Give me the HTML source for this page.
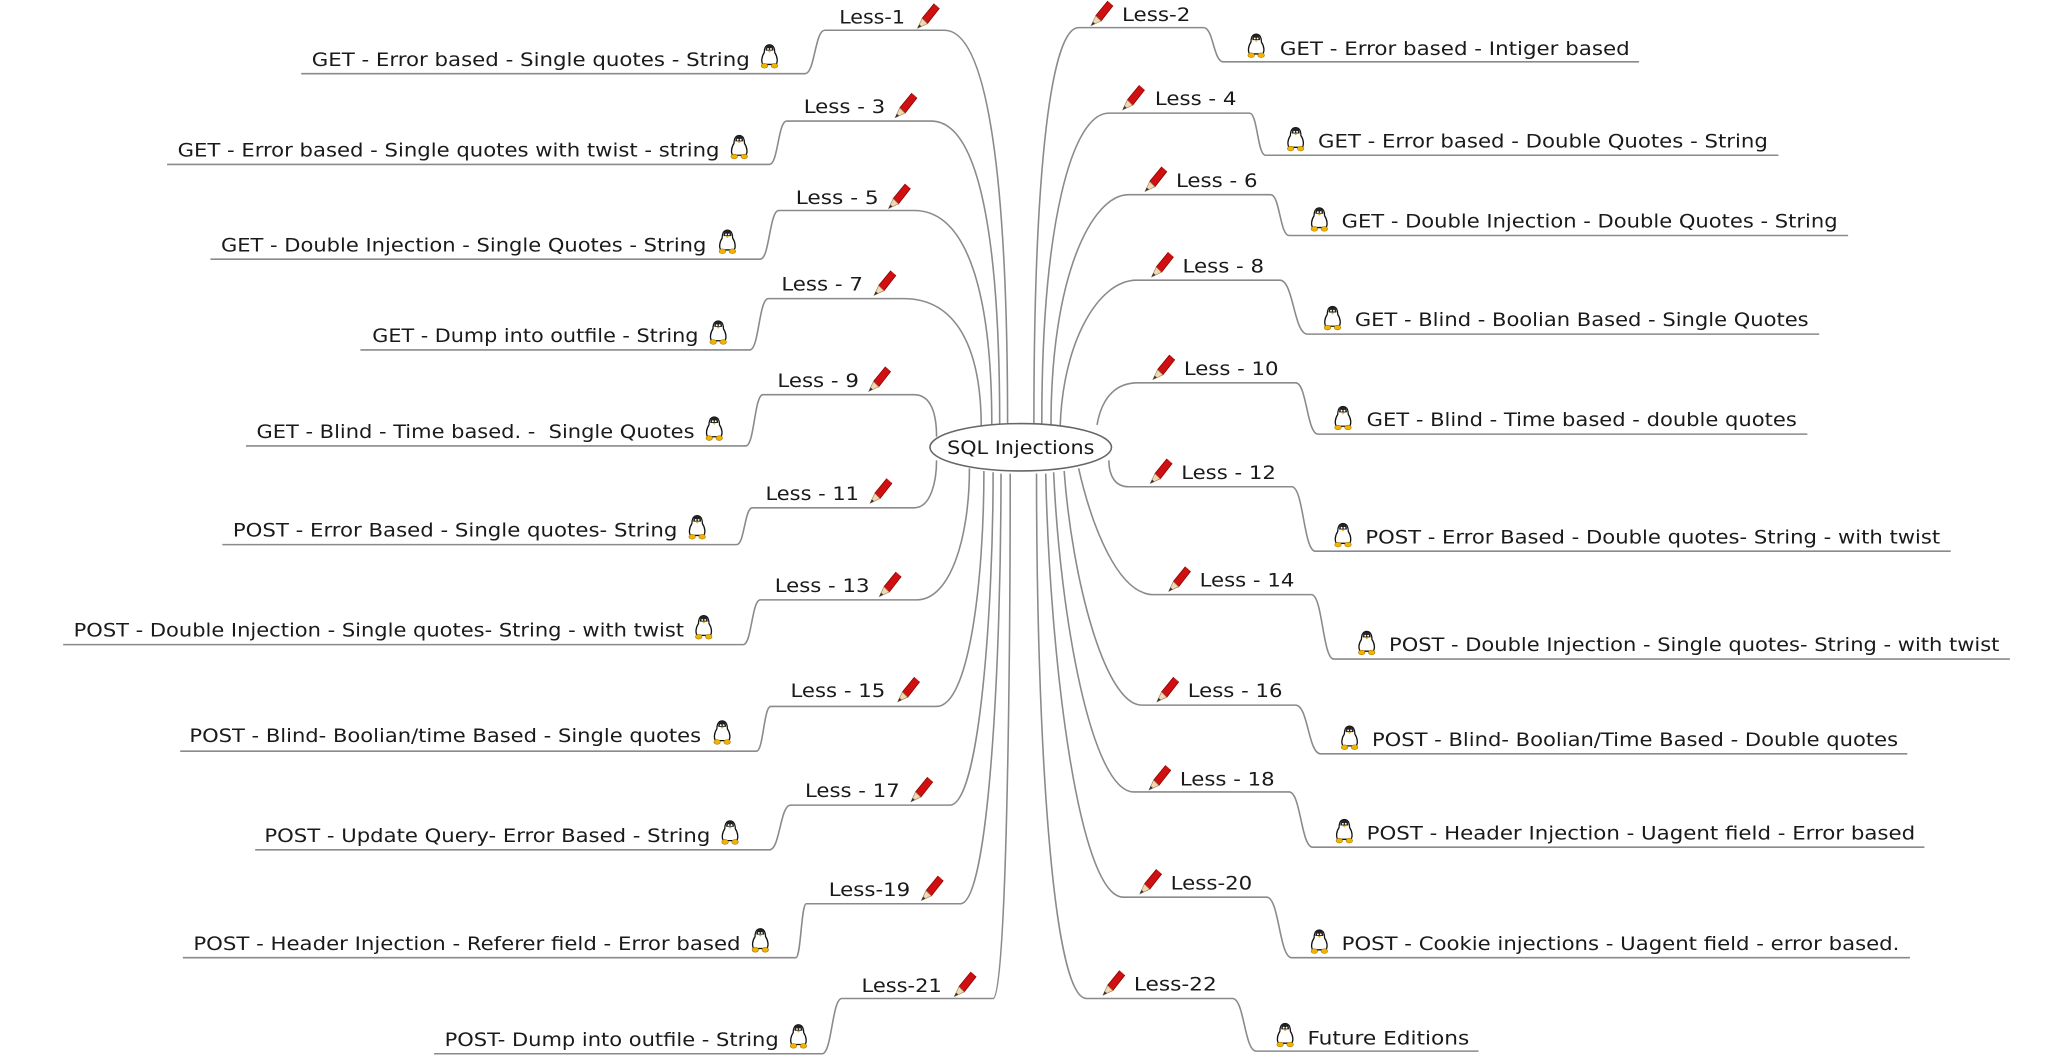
<!DOCTYPE html>
<html><head><meta charset="utf-8"><style>
html,body{margin:0;padding:0;background:#fff;width:2052px;height:1059px;overflow:hidden}
svg{display:block}
text{font-family:"DejaVu Sans Condensed","DejaVu Sans","Liberation Sans",sans-serif;font-size:14.5px;fill:#1a1a1a}
path.c{fill:none;stroke:#8a8a8a;stroke-width:1.2}
</style></head><body>
<svg width="2052" height="1059" viewBox="0 0 1560 805" preserveAspectRatio="none" xmlns="http://www.w3.org/2000/svg">
<defs>
<g id="pen">
<polygon points="6,12 15,1 19,4.5 10,16" fill="#d01010" stroke="#8a0000" stroke-width="0.6"/>
<polygon points="15,1 19,4.5 17,2" fill="#ff6060"/>
<polygon points="6,12 10,16 2.5,19.5" fill="#f0d8b0" stroke="#a08060" stroke-width="0.5"/>
<polygon points="2.5,19.5 3.8,16.5 5.5,18" fill="#333"/>
</g>
<g id="tux">
<path d="M8,1 C4.5,1 4,5 4,7 C2,10 1.5,14 3,16 L13,16 C14.5,14 14,10 12,7 C12,5 11.5,1 8,1Z" fill="#fff" stroke="#111" stroke-width="1"/>
<path d="M8,1 C5.5,1 5,3.5 5,5.5 L11,5.5 C11,3.5 10.5,1 8,1Z" fill="#222"/>
<circle cx="6.9" cy="4.2" r="0.7" fill="#fff"/><circle cx="9.1" cy="4.2" r="0.7" fill="#fff"/>
<path d="M6.7,5.6 L9.3,5.6 L8,7Z" fill="#f0b000"/>
<ellipse cx="4.2" cy="17" rx="2.5" ry="1.8" fill="#f0b400" stroke="#a07000" stroke-width="0.4"/>
<ellipse cx="11.8" cy="17" rx="2.5" ry="1.8" fill="#f0b400" stroke="#a07000" stroke-width="0.4"/>
</g>
</defs>

<path class="c" d="M229 56 H612 C619.5 56 619.5 23 627 23 H718 C752 23 766 143 766 322"/>
<path class="c" d="M127 125 H585 C591.5 125 591.5 92 598 92 H708 C745 92 760 184 760 322"/>
<path class="c" d="M160 197 H578 C585 197 585 160 592 160 H695 C736 160 754 225 754 323"/>
<path class="c" d="M274 266 H570 C577 266 577 227 584 227 H687 C728 227 746 266 746 325"/>
<path class="c" d="M187 339 H567 C573.5 339 573.5 300 580 300 H695 C708 300 712 315 712 332"/>
<path class="c" d="M169 414 H560 C566 414 566 386 572 386 H695 C708 386 712 365 712 350"/>
<path class="c" d="M48 490 H565 C571.5 490 571.5 456 578 456 H697 C722 456 737 410 737 356"/>
<path class="c" d="M137 571 H575 C580.5 571 580.5 537 586 537 H712 C737 537 748 440 748 358"/>
<path class="c" d="M194 646 H585 C593 646 593 612 601 612 H722 C745 612 755 460 755 359"/>
<path class="c" d="M139 728 H605 C609 728 609 687 613 687 H730 C752 687 761 500 761 360"/>
<path class="c" d="M330 801 H625 C632.5 801 632.5 759 640 759 H755 C765 759 768 520 768 360"/>
<path class="c" d="M786 322 C786 120 800 21 820 21 H915 C922.5 21 922.5 47 930 47 H1246"/>
<path class="c" d="M792 322 C792 170 815 86 843 86 H950 C956 86 956 118 962 118 H1352"/>
<path class="c" d="M799 323 C799 210 830 148 858 148 H966 C973 148 973 179 980 179 H1405"/>
<path class="c" d="M806 324 C808 260 835 213 864 213 H973 C983.5 213 983.5 254 994 254 H1383"/>
<path class="c" d="M834 323 C838 300 850 291 865 291 H985 C993.5 291 993.5 330 1002 330 H1374"/>
<path class="c" d="M843 350 C843 362 848 370 858 370 H982 C991 370 991 419 1000 419 H1483"/>
<path class="c" d="M820 356 C830 400 850 452 877 452 H997 C1005.5 452 1005.5 501 1014 501 H1528"/>
<path class="c" d="M809 358 C815 440 840 536 868 536 H985 C994.5 536 994.5 573 1004 573 H1450"/>
<path class="c" d="M801 359 C806 470 830 602 862 602 H980 C989 602 989 644 998 644 H1463"/>
<path class="c" d="M795 360 C798 500 820 682 854 682 H963 C972.5 682 972.5 728 982 728 H1452"/>
<path class="c" d="M788 360 C788 560 800 759 826 759 H937 C946 759 946 799 955 799 H1124"/>

<ellipse cx="776" cy="340" rx="69" ry="18" fill="#fff" stroke="#666" stroke-width="1.2"/>
<text x="720" y="345" textLength="112" lengthAdjust="spacingAndGlyphs">SQL Injections</text>

<text x="638" y="18" textLength="50" lengthAdjust="spacingAndGlyphs">Less-1</text><use href="#pen" x="695" y="2"/>
<text x="611" y="86" textLength="62" lengthAdjust="spacingAndGlyphs">Less - 3</text><use href="#pen" x="678" y="70"/>
<text x="605" y="155" textLength="63" lengthAdjust="spacingAndGlyphs">Less - 5</text><use href="#pen" x="673" y="139"/>
<text x="594" y="221" textLength="62" lengthAdjust="spacingAndGlyphs">Less - 7</text><use href="#pen" x="662" y="205"/>
<text x="591" y="294" textLength="62" lengthAdjust="spacingAndGlyphs">Less - 9</text><use href="#pen" x="658" y="278"/>
<text x="582" y="380" textLength="71" lengthAdjust="spacingAndGlyphs">Less - 11</text><use href="#pen" x="659" y="363"/>
<text x="589" y="450" textLength="72" lengthAdjust="spacingAndGlyphs">Less - 13</text><use href="#pen" x="666" y="434"/>
<text x="601" y="530" textLength="72" lengthAdjust="spacingAndGlyphs">Less - 15</text><use href="#pen" x="680" y="514"/>
<text x="612" y="606" textLength="72" lengthAdjust="spacingAndGlyphs">Less - 17</text><use href="#pen" x="690" y="590"/>
<text x="630" y="681" textLength="62" lengthAdjust="spacingAndGlyphs">Less-19</text><use href="#pen" x="698" y="665"/>
<text x="655" y="754" textLength="61" lengthAdjust="spacingAndGlyphs">Less-21</text><use href="#pen" x="723" y="738"/>

<text x="237" y="50" textLength="333" lengthAdjust="spacingAndGlyphs">GET - Error based - Single quotes - String</text><use href="#tux" x="577" y="33"/>
<text x="135" y="119" textLength="412" lengthAdjust="spacingAndGlyphs">GET - Error based - Single quotes with twist - string</text><use href="#tux" x="554" y="102"/>
<text x="168" y="191" textLength="369" lengthAdjust="spacingAndGlyphs">GET - Double Injection - Single Quotes - String</text><use href="#tux" x="545" y="174"/>
<text x="283" y="260" textLength="248" lengthAdjust="spacingAndGlyphs">GET - Dump into outfile - String</text><use href="#tux" x="538" y="243"/>
<text x="195" y="333" textLength="333" lengthAdjust="spacingAndGlyphs" xml:space="preserve">GET - Blind - Time based. -  Single Quotes</text><use href="#tux" x="535" y="316"/>
<text x="177" y="408" textLength="338" lengthAdjust="spacingAndGlyphs">POST - Error Based - Single quotes- String</text><use href="#tux" x="522" y="391"/>
<text x="56" y="484" textLength="464" lengthAdjust="spacingAndGlyphs">POST - Double Injection - Single quotes- String - with twist</text><use href="#tux" x="527" y="467"/>
<text x="144" y="564" textLength="389" lengthAdjust="spacingAndGlyphs">POST - Blind- Boolian/time Based - Single quotes</text><use href="#tux" x="541" y="547"/>
<text x="201" y="640" textLength="339" lengthAdjust="spacingAndGlyphs">POST - Update Query- Error Based - String</text><use href="#tux" x="547" y="623"/>
<text x="147" y="722" textLength="416" lengthAdjust="spacingAndGlyphs">POST - Header Injection - Referer field - Error based</text><use href="#tux" x="570" y="705"/>
<text x="338" y="795" textLength="254" lengthAdjust="spacingAndGlyphs">POST- Dump into outfile - String</text><use href="#tux" x="599" y="778"/>

<use href="#pen" x="827" y="0"/><text x="853" y="16" textLength="52" lengthAdjust="spacingAndGlyphs">Less-2</text>
<use href="#pen" x="851" y="64"/><text x="878" y="80" textLength="62" lengthAdjust="spacingAndGlyphs">Less - 4</text>
<use href="#pen" x="868" y="126"/><text x="894" y="142" textLength="62" lengthAdjust="spacingAndGlyphs">Less - 6</text>
<use href="#pen" x="873" y="191"/><text x="899" y="207" textLength="62" lengthAdjust="spacingAndGlyphs">Less - 8</text>
<use href="#pen" x="874" y="269"/><text x="900" y="285" textLength="72" lengthAdjust="spacingAndGlyphs">Less - 10</text>
<use href="#pen" x="872" y="348"/><text x="898" y="364" textLength="72" lengthAdjust="spacingAndGlyphs">Less - 12</text>
<use href="#pen" x="886" y="430"/><text x="912" y="446" textLength="72" lengthAdjust="spacingAndGlyphs">Less - 14</text>
<use href="#pen" x="877" y="514"/><text x="903" y="530" textLength="72" lengthAdjust="spacingAndGlyphs">Less - 16</text>
<use href="#pen" x="871" y="581"/><text x="897" y="597" textLength="72" lengthAdjust="spacingAndGlyphs">Less - 18</text>
<use href="#pen" x="864" y="660"/><text x="890" y="676" textLength="62" lengthAdjust="spacingAndGlyphs">Less-20</text>
<use href="#pen" x="836" y="737"/><text x="862" y="753" textLength="63" lengthAdjust="spacingAndGlyphs">Less-22</text>

<use href="#tux" x="947" y="25"/><text x="973" y="42" textLength="266" lengthAdjust="spacingAndGlyphs">GET - Error based - Intiger based</text>
<use href="#tux" x="977" y="96"/><text x="1002" y="112" textLength="342" lengthAdjust="spacingAndGlyphs">GET - Error based - Double Quotes - String</text>
<use href="#tux" x="995" y="157"/><text x="1020" y="173" textLength="377" lengthAdjust="spacingAndGlyphs">GET - Double Injection - Double Quotes - String</text>
<use href="#tux" x="1005" y="232"/><text x="1030" y="248" textLength="345" lengthAdjust="spacingAndGlyphs">GET - Blind - Boolian Based - Single Quotes</text>
<use href="#tux" x="1013" y="308"/><text x="1039" y="324" textLength="327" lengthAdjust="spacingAndGlyphs">GET - Blind - Time based - double quotes</text>
<use href="#tux" x="1013" y="397"/><text x="1038" y="413" textLength="437" lengthAdjust="spacingAndGlyphs">POST - Error Based - Double quotes- String - with twist</text>
<use href="#tux" x="1031" y="479"/><text x="1056" y="495" textLength="464" lengthAdjust="spacingAndGlyphs">POST - Double Injection - Single quotes- String - with twist</text>
<use href="#tux" x="1018" y="551"/><text x="1043" y="567" textLength="400" lengthAdjust="spacingAndGlyphs">POST - Blind- Boolian/Time Based - Double quotes</text>
<use href="#tux" x="1014" y="622"/><text x="1039" y="638" textLength="417" lengthAdjust="spacingAndGlyphs">POST - Header Injection - Uagent field - Error based</text>
<use href="#tux" x="995" y="706"/><text x="1020" y="722" textLength="424" lengthAdjust="spacingAndGlyphs">POST - Cookie injections - Uagent field - error based.</text>
<use href="#tux" x="969" y="777"/><text x="994" y="794" textLength="123" lengthAdjust="spacingAndGlyphs">Future Editions</text>
</svg>
</body></html>
